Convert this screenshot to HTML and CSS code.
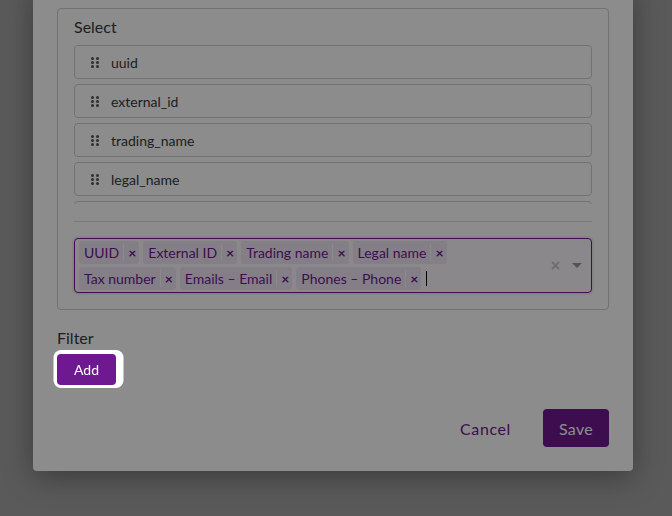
FILE: index.html
```html
<!DOCTYPE html>
<html lang="en">
<head>
  <meta charset="UTF-8">
  <title>Export settings</title>
  <link rel="stylesheet" href="styles.css">
</head>
<body>
  <div class="modal">
    <div class="modal-body">
      <div class="select-box">
        <div class="box-label">Select</div>
        <ul class="field-list">
          <li class="field-item"><svg class="handle" width="8" height="11" viewBox="0 0 8 11"><circle cx="1.5" cy="1.5" r="1.5"/><circle cx="6.5" cy="1.5" r="1.5"/><circle cx="1.5" cy="5.5" r="1.5"/><circle cx="6.5" cy="5.5" r="1.5"/><circle cx="1.5" cy="9.5" r="1.5"/><circle cx="6.5" cy="9.5" r="1.5"/></svg>uuid</li>
          <li class="field-item"><svg class="handle" width="8" height="11" viewBox="0 0 8 11"><circle cx="1.5" cy="1.5" r="1.5"/><circle cx="6.5" cy="1.5" r="1.5"/><circle cx="1.5" cy="5.5" r="1.5"/><circle cx="6.5" cy="5.5" r="1.5"/><circle cx="1.5" cy="9.5" r="1.5"/><circle cx="6.5" cy="9.5" r="1.5"/></svg>external_id</li>
          <li class="field-item"><svg class="handle" width="8" height="11" viewBox="0 0 8 11"><circle cx="1.5" cy="1.5" r="1.5"/><circle cx="6.5" cy="1.5" r="1.5"/><circle cx="1.5" cy="5.5" r="1.5"/><circle cx="6.5" cy="5.5" r="1.5"/><circle cx="1.5" cy="9.5" r="1.5"/><circle cx="6.5" cy="9.5" r="1.5"/></svg>trading_name</li>
          <li class="field-item"><svg class="handle" width="8" height="11" viewBox="0 0 8 11"><circle cx="1.5" cy="1.5" r="1.5"/><circle cx="6.5" cy="1.5" r="1.5"/><circle cx="1.5" cy="5.5" r="1.5"/><circle cx="6.5" cy="5.5" r="1.5"/><circle cx="1.5" cy="9.5" r="1.5"/><circle cx="6.5" cy="9.5" r="1.5"/></svg>legal_name</li>
          <li class="field-item field-item-peek"></li>
        </ul>
        <hr class="divider">
        <div class="multi">
          <div class="tags">
            <span class="tag"><span class="tag-label">UUID</span><span class="tag-x">×</span></span>
            <span class="tag"><span class="tag-label">External ID</span><span class="tag-x">×</span></span>
            <span class="tag"><span class="tag-label">Trading name</span><span class="tag-x">×</span></span>
            <span class="tag"><span class="tag-label">Legal name</span><span class="tag-x">×</span></span>
            <span class="tag"><span class="tag-label">Tax number</span><span class="tag-x">×</span></span>
            <span class="tag"><span class="tag-label">Emails – Email</span><span class="tag-x">×</span></span>
            <span class="tag"><span class="tag-label">Phones – Phone</span><span class="tag-x">×</span></span>
            <span class="text-cursor"></span>
          </div>
          <div class="multi-controls">
            <svg class="clear" width="9" height="9" viewBox="0 0 9 9"><path d="M1 1L8 8M8 1L1 8" stroke="currentColor" stroke-width="1.8"/></svg>
            <span class="arrow"></span>
          </div>
        </div>
      </div>

      <div class="box-label filter-label">Filter</div>
      <div class="filter-actions">
        <button class="btn-add">Add</button>
      </div>
    </div>

    <div class="modal-footer">
      <button class="btn-link">Cancel</button>
      <button class="btn-primary">Save</button>
    </div>
  </div>

  <div class="overlay"></div>
</body>
</html>
```

FILE: styles.css
```css
:root {
  --purple: #6f1990;
  --text: #343a40;
  --border: #cfcfcf;
}
html, body {
  height: 516px;
  margin: 0;
  overflow: hidden;
}
body {
  font-family: Lato, "Noto Sans", sans-serif;
  background: #a4a4a4;
  color: var(--text);
  display: flex;
  flex-direction: column;
  justify-content: flex-end;
  align-items: flex-start;
}
.modal {
  flex-shrink: 0;
  width: 600px;
  margin: 0 0 45px 33px;
  background: #fff;
  border-radius: 4px;
  box-shadow: 0 6px 30px rgba(0,0,0,0.35);
}
.modal-body {
  padding: 24px 24px 0;
}
.select-box {
  border: 1px solid var(--border);
  border-radius: 4px;
  padding: 6px 16px 16px;
}
.box-label {
  font-size: 16px;
  line-height: 24px;
}
.field-list {
  list-style: none;
  margin: 6px 0 0;
  padding: 0;
  height: 159px;
  overflow: hidden;
  display: flex;
  flex-direction: column;
  gap: 5px;
}
.field-item {
  flex-shrink: 0;
  height: 34px;
  box-sizing: border-box;
  border: 1px solid var(--border);
  border-radius: 4px;
  display: flex;
  align-items: center;
  padding-left: 16px;
  font-size: 14px;
}
.handle {
  fill: #555;
  margin-right: 12px;
}
.divider {
  border: none;
  border-top: 1px solid #dcdcdc;
  margin: 17px 0 16px;
}
.multi {
  display: flex;
  align-items: center;
  min-height: 55px;
  box-sizing: border-box;
  border: 1px solid var(--purple);
  border-radius: 4px;
  background: #fbf8fc;
  box-shadow: 0 0 0 2px rgba(111,25,144,0.08);
}
.tags {
  flex: 1;
  display: flex;
  flex-wrap: wrap;
  align-items: center;
  gap: 3px 4px;
  padding: 2px 4px;
}
.tag {
  display: flex;
  align-items: center;
  height: 23px;
  background: #f1e8f5;
  border-radius: 3px;
  color: var(--purple);
  font-size: 14px;
}
.tag-label {
  padding: 0 4px 0 5px;
}
.tag-x {
  border-left: 1px solid #fdfbfe;
  height: 17px;
  line-height: 17px;
  padding: 0 3px 0 4px;
  font-size: 14px;
  font-weight: bold;
}
.text-cursor {
  width: 1px;
  height: 15px;
  background: #000;
  margin-left: 1px;
}
.multi-controls {
  display: flex;
  align-items: center;
  gap: 12px;
  padding-right: 9px;
}
.clear {
  color: #c8c8c8;
}
.arrow {
  width: 0;
  height: 0;
  border-left: 5px solid transparent;
  border-right: 5px solid transparent;
  border-top: 5px solid #999;
}
.filter-label {
  margin-top: 16px;
}
.filter-actions {
  display: flex;
  padding-top: 4px;
}
button {
  font-family: inherit;
  border: none;
  cursor: pointer;
}
.btn-add {
  position: relative;
  z-index: 20;
  height: 31px;
  width: 59px;
  background: var(--purple);
  color: #fff;
  font-size: 14px;
  border-radius: 4px;
  box-shadow: 0 -0.5px 0 3.5px #fff, 4px -0.5px 0 3.5px #fff;
}
.modal-footer {
  display: flex;
  justify-content: flex-end;
  align-items: center;
  gap: 16px;
  padding: 24px;
}
.btn-link {
  background: none;
  color: var(--purple);
  font-size: 16px;
  letter-spacing: 0.6px;
  padding: 0 16px;
}
.btn-primary {
  background: var(--purple);
  color: #fff;
  font-size: 16px;
  height: 38px;
  padding: 0 16px;
  border-radius: 4px;
  letter-spacing: 0.3px;
}
.overlay {
  position: fixed;
  inset: 0;
  z-index: 10;
  background: rgba(0,0,0,0.45);
}
```
